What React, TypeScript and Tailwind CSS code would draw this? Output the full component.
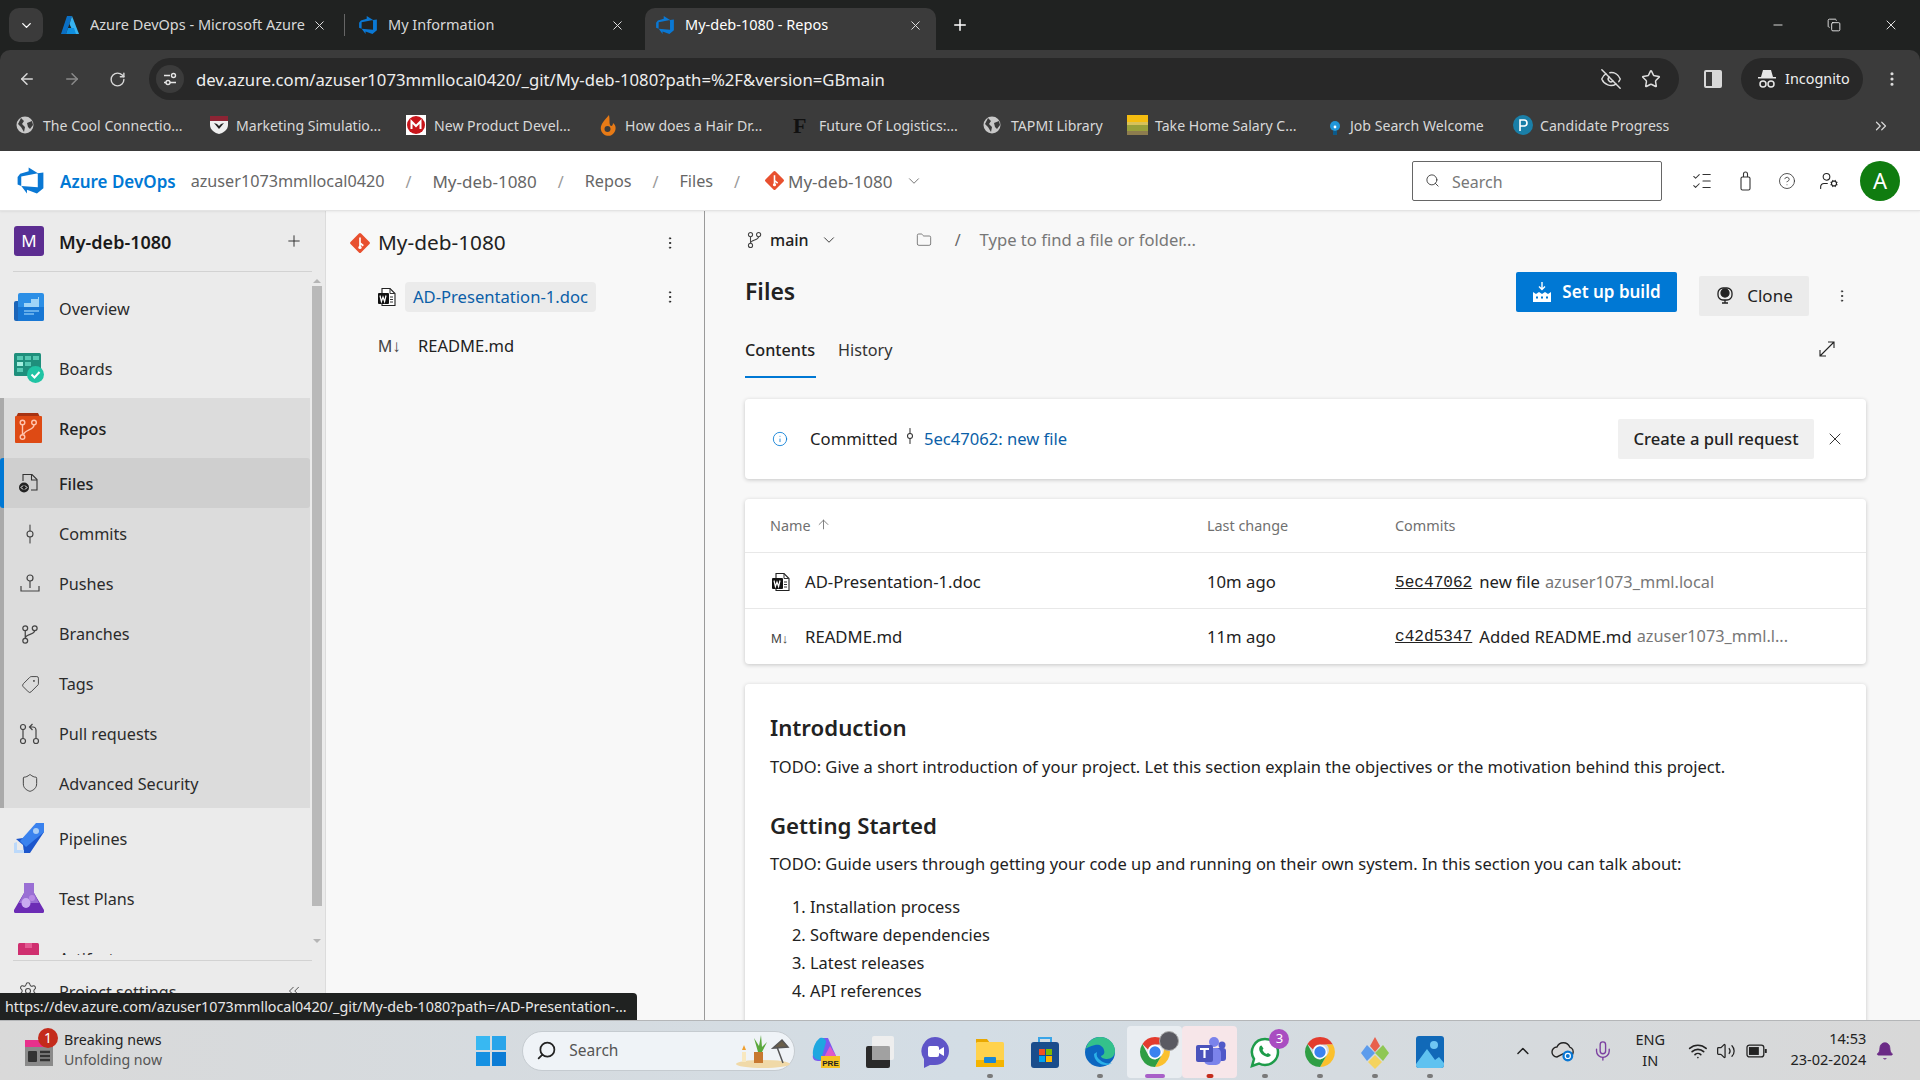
import React from "react";
import {
  X, Plus, ChevronDown, ChevronUp, ArrowLeft, ArrowRight, RotateCw, Star, EyeOff, EllipsisVertical, Search,
  ListChecks, CircleHelp, UserCog, GitCommitVertical, Tag, Shield,
  Folder, Info, ArrowUp, ChevronsLeft, Settings, Mic, Wifi, Volume2, Bell, Minus, Copy, ChevronsRight,
} from "lucide-react";

const DevOps = ({ s = 20, c = "#0a78d4" }: { s?: number; c?: string }) => (
  <svg width={s} height={s} viewBox="0 0 18 18" fill={c} className="shrink-0">
    <path d="M17 4v9.74l-4 3.28-6.2-2.26V17L3.29 12.41l10.23.8V4.44zm-3.41.49L7.85 1v2.29L2.58 4.84 1 6.87v4.61l2.26 1V6.57z" />
  </svg>
);
const AzureA = () => (
  <svg width="20" height="20" viewBox="0 0 20 20" className="shrink-0">
    <path d="M7 1h5L6 19H1z" fill="#0a6fc4" />
    <path d="M12 1l7 18h-5L9.5 9z" fill="#37b3f0" />
    <path d="M8 13h6l2 6H6z" fill="#0f8fe0" />
  </svg>
);
const GitDiamond = ({ s = 20 }: { s?: number }) => (
  <svg width={s} height={s} viewBox="0 0 20 20" className="shrink-0">
    <rect x="3.2" y="3.2" width="13.6" height="13.6" rx="1.4" transform="rotate(45 10 10)" fill="#e8502f" />
    <path d="M10 5v9M10 10l3 2.5" stroke="#fff" strokeWidth="1.5" fill="none" />
    <circle cx="10" cy="14" r="1.5" fill="#fff" />
  </svg>
);
const WordDoc = () => (
  <svg width="22" height="22" viewBox="0 0 22 22" className="shrink-0">
    <path d="M6 2.5h8l5 5v12H6z" fill="#fff" stroke="#222" strokeWidth="1.1" />
    <path d="M14 2.5v5h5M14 11h3M14 13.5h3M14 16h3" fill="none" stroke="#333" strokeWidth="1" />
    <rect x="2" y="7" width="11" height="11" fill="#111" rx="1" />
    <path d="M4 9.5l1.4 6 1.6-4.5 1.6 4.5 1.4-6" fill="none" stroke="#fff" strokeWidth="1.2" />
  </svg>
);
const MdIcon = ({ small }: { small?: boolean }) => (
  <span className={`font-['Liberation_Sans',sans-serif] leading-none text-[#444] shrink-0 ${small ? "text-[13px]" : "text-[17px]"}`}>M↓</span>
);
const BranchIcon = ({ s = 20, className = "" }: { s?: number; className?: string }) => (
  <svg width={s} height={s} viewBox="0 0 20 20" fill="none" stroke="#444" strokeWidth="1.2" className={`shrink-0 ${className}`}>
    <circle cx="5" cy="4" r="2.3" />
    <circle cx="14" cy="4" r="2.3" />
    <circle cx="5" cy="16" r="2.3" />
    <path d="M5 6.3v7.4M14 6.300c0 4.200-9 3-9 7.400" />
  </svg>
);
const PullIcon = () => (
  <svg width="22" height="22" viewBox="0 0 22 22" fill="none" stroke="#444" strokeWidth="1.2" className="shrink-0">
    <circle cx="4" cy="4" r="2.5" />
    <circle cx="4" cy="18" r="2.5" />
    <circle cx="17" cy="18" r="2.5" />
    <path d="M4 6.500v9M17 15.500V7a3 3 0 0 0-3-3h-3M13.500 1l-3 3 3 3" />
  </svg>
);

const Overview = () => (
  <svg width="30" height="30" viewBox="0 0 30 30" className="shrink-0">
    <rect x="0" y="8" width="10" height="20" rx="2" fill="#1c65b8" />
    <rect x="4" y="0" width="26" height="28" rx="2" fill="#2c8fe6" />
    <path d="M4 14h26v12a2 2 0 0 1-2 2H4z" fill="#1877d4" />
    <path d="M10 14V10h7V6h7V4h1v10z" fill="#9fd4f7" />
    <path d="M10 18h15M10 21h10" stroke="#7cc0f2" strokeWidth="1.4" />
  </svg>
);
const Boards = () => (
  <svg width="30" height="30" viewBox="0 0 30 30" className="shrink-0">
    <rect x="0" y="0" width="27" height="23" rx="1.5" fill="#1f8f7c" />
    <path d="M3 3h6v4H3zM11 3h6v4h-6zM19 3h6v4h-6zM11 9h6v4h-6zM3 15h6v4H3z" fill="#57c9b3" />
    <rect x="3" y="9" width="6" height="4" fill="#a5f0e0" />
    <circle cx="21.5" cy="21.5" r="8.5" fill="#20c4a4" />
    <path d="M17.5 21.5l3 3 5-5.5" stroke="#fff" strokeWidth="2" fill="none" />
  </svg>
);
const Repos = () => (
  <svg width="30" height="30" viewBox="0 0 30 30" className="shrink-0">
    <path d="M4 0h20l2 4H2z" fill="#a83312" />
    <rect x="1" y="3" width="27" height="27" rx="1" fill="#de4a14" />
    <g stroke="#ffc4ae" strokeWidth="1.4" fill="none">
      <circle cx="8.5" cy="9.5" r="2.3" />
      <circle cx="20" cy="9.5" r="2.3" />
      <circle cx="8.5" cy="24" r="2.3" />
      <path d="M8.5 12v9.5M20 12c0 5-9 4.5-10.5 9.5" />
    </g>
  </svg>
);
const Pipelines = () => (
  <svg width="30" height="30" viewBox="0 0 30 30" className="shrink-0">
    <path d="M30 0v9L16 30h-6l-1-8-7-6 7-1z" fill="#1c56cc" />
    <path d="M22 0h8v9L12 24l-6-6z" fill="#3a82ee" />
    <circle cx="22" cy="8" r="3" fill="#a9cdf6" />
    <path d="M0 30v-10l3-1v8h7v3z" fill="#bcd9fa" />
  </svg>
);
const TestPlans = () => (
  <svg width="30" height="30" viewBox="0 0 30 30" className="shrink-0">
    <path d="M10 0h10v10l10 17a2 2 0 0 1-2 3H2a2 2 0 0 1-2-3L10 10z" fill="#6c2cb5" />
    <path d="M10 0h10v10l5 10H5l5-10z" fill="#9a6fd4" />
    <ellipse cx="12" cy="20" rx="4.5" ry="5" fill="#c9aaf0" />
    <circle cx="18" cy="15" r="3" fill="#b88ae5" />
  </svg>
);
const Artifacts = () => (
  <svg width="22" height="30" viewBox="0 0 22 30" className="shrink-0">
    <rect x="0" y="0" width="21" height="30" rx="1.5" fill="#cf2f6f" />
    <rect x="7" y="0" width="7" height="5" fill="#e35a92" />
  </svg>
);

const FilesIcon = () => (
  <svg width="22" height="22" viewBox="0 0 22 22" className="shrink-0">
    <path d="M5 9V2.5h9l5 5V18h-6" fill="none" stroke="#333" strokeWidth="1.1" />
    <path d="M13.5 2.5V8H19" fill="none" stroke="#333" strokeWidth="1.1" />
    <circle cx="6" cy="15.5" r="5" fill="#222" />
    <path d="M5 13.5l-2 2 2 2M7 13.5l2 2-2 2" fill="none" stroke="#fff" strokeWidth="1" />
  </svg>
);
const PushIcon = () => (
  <svg width="22" height="22" viewBox="0 0 22 22" fill="none" stroke="#444" strokeWidth="1.2" className="shrink-0">
    <circle cx="11" cy="5" r="3" />
    <path d="M11 8v7M2 13v5h18v-5" />
  </svg>
);

const top = [
  { label: "Overview", icon: <Overview /> },
  { label: "Boards", icon: <Boards /> },
];
const subs = [
  { label: "Commits", icon: <GitCommitVertical size={24} strokeWidth={1.1} color="#444" /> },
  { label: "Pushes", icon: <PushIcon /> },
  { label: "Branches", icon: <BranchIcon s={21} /> },
  { label: "Tags", icon: <Tag size={19} strokeWidth={1.2} color="#444" className="-scale-x-100" /> },
  { label: "Pull requests", icon: <PullIcon /> },
  { label: "Advanced Security", icon: <Shield size={20} strokeWidth={1.2} color="#444" /> },
];

const NavText = ({ children, strong, flat }: { children: React.ReactNode; strong?: boolean; flat?: boolean }) => (
  <span className={`${flat ? "" : "mt-[2px]"} text-[16.2px] whitespace-nowrap ${strong ? "font-medium text-[#222]" : "text-[#2b2b2b]"}`}>{children}</span>
);

const Sidebar = () => (
  <aside className="w-[326px] shrink-0 bg-[#ebebeb] border-r border-[#dcdcdc] flex flex-col h-full overflow-hidden">
    <div className="h-[60px] shrink-0 flex items-center pl-[14px] pr-[22px]">
      <div className="w-[30px] h-[30px] rounded-[3px] bg-[#5c2d91] text-white flex items-center justify-center text-[17px]">M</div>
      <span className="ml-[15px] mt-[2px] text-[18px] font-semibold text-[#1a1a1a]">My-deb-1080</span>
      <Plus size={18} strokeWidth={1.2} className="ml-auto text-[#222]" />
    </div>
    <div className="h-px mx-[13px] w-[299px] bg-[#d2d2d2] shrink-0" />
    <div className="h-[683px] shrink-0 flex overflow-hidden">
      <div className="w-[310px] shrink-0 pt-[6px]">
        {top.map((t) => (
          <div key={t.label} className="h-[60px] flex items-center pl-[14px] gap-[15px]">
            <span className="w-[30px] flex justify-center">{t.icon}</span>
            <NavText>{t.label}</NavText>
          </div>
        ))}
        <div className="bg-[#dcdcdc] border-l-4 border-[#aaaaaa]">
          <div className="h-[60px] flex items-center pl-[10px] gap-[15px]">
            <Repos />
            <NavText strong>Repos</NavText>
          </div>
          <div className="h-[50px] flex items-center pl-[11px] -ml-1 bg-[#cfcfcf] border-l-4 border-[#0078d4] rounded-[3px] mb-px gap-[18px]">
            <span className="w-[25px] flex justify-center ml-[1px]"><FilesIcon /></span>
            <NavText strong>Files</NavText>
          </div>
          {subs.map((t, i) => (
            <div key={t.label} className={`flex items-center pl-[14px] gap-[17px] ${i === 5 ? "h-[49px] pb-px" : "h-[50px]"}`}>
              <span className="w-[24px] flex justify-center">{t.icon}</span>
              <NavText flat={i < 5}>{t.label}</NavText>
            </div>
          ))}
        </div>
        <div className="h-[60px] flex items-center pl-[14px] gap-[15px]">
          <Pipelines />
          <NavText>Pipelines</NavText>
        </div>
        <div className="h-[60px] flex items-center pl-[14px] gap-[15px]">
          <TestPlans />
          <NavText>Test Plans</NavText>
        </div>
        <div className="h-[60px] flex items-center pl-[18px] gap-[19px]">
          <Artifacts />
          <NavText>Artifacts</NavText>
        </div>
      </div>
      <div className="w-[10px] ml-[2px] shrink-0 flex flex-col items-center pt-[7px]">
        <div className="w-0 h-0 border-l-[4px] border-r-[4px] border-b-[4px] border-transparent border-b-[#b5b5b5]" />
        <div className="w-[10px] h-[620px] mt-[3px] bg-[#b9b9b9]" />
        <div className="mt-[33px] w-0 h-0 border-l-[4px] border-r-[4px] border-t-[4px] border-transparent border-t-[#b5b5b5]" />
      </div>
    </div>
    <div className="h-[5px] shrink-0" />
    <div className="h-px mx-[13px] w-[299px] bg-[#d2d2d2] shrink-0" />
    <div className="h-[60px] shrink-0 flex items-center pl-[18px] pr-[22px] gap-[21px]">
      <Settings size={20} strokeWidth={1.25} color="#444" />
      <NavText>Project settings</NavText>
      <ChevronsLeft size={18} strokeWidth={1.1} className="ml-auto text-[#333]" />
    </div>
  </aside>
);

const TreePanel = () => (
  <section className="w-[379px] shrink-0 bg-[#f8f8f8] border-r border-[#9a9a9a] h-full pt-[16px]">
    <div className="h-[32px] flex items-center pl-[23px] pr-[26px]">
      <GitDiamond s={22} />
      <span className="ml-[7px] text-[20.8px] text-[#222]">My-deb-1080</span>
      <EllipsisVertical size={16} strokeWidth={1.5} className="ml-auto text-[#222]" />
    </div>
    <div className="mt-[23px] h-[30px] flex items-center pl-[50px] pr-[26px]">
      <WordDoc />
      <span className="ml-[7px] h-[30px] w-[191px] rounded-[4px] bg-[#ebebeb] flex items-center pl-[8px] pt-[1px] text-[16.6px] text-[#0b5fa8] whitespace-nowrap">AD-Presentation-1.doc</span>
      <EllipsisVertical size={16} strokeWidth={1.5} className="ml-auto text-[#222]" />
    </div>
    <div className="mt-[19px] h-[30px] flex items-center pl-[52px]">
      <span className="w-[40px]"><MdIcon /></span>
      <span className="text-[16.5px] text-[#222]">README.md</span>
    </div>
  </section>
);

const Card = ({ className = "", children }: { className?: string; children: React.ReactNode }) => (
  <div className={`bg-white rounded-[4px] shadow-[0_1px_4px_rgba(0,0,0,0.2)] ${className}`}>{children}</div>
);

const rowCols = "grid grid-cols-[437px_188px_1fr] items-center pl-[25px]";

const Main = () => (
  <main className="flex-1 min-w-0 h-full bg-[#f8f8f8] overflow-hidden pl-[40px] pr-[54px] pt-[12px]">
    <div className="h-[34px] flex items-center">
      <BranchIcon s={18} className="ml-[1px]" />
      <span className="ml-[6px] text-[16px] font-medium text-[#222]">main</span>
      <ChevronDown size={18} strokeWidth={1.25} className="ml-[11px] text-[#333]" />
      <Folder size={16} strokeWidth={1.1} className="ml-[78px] text-[#555]" />
      <span className="ml-[23px] text-[16px] text-[#666]">/</span>
      <span className="ml-[19px] text-[16.6px] text-[#777]">Type to find a file or folder...</span>
    </div>
    <div className="h-[56px] mt-[11px] flex items-center">
      <h1 className="text-[23px] font-semibold text-[#222] mt-[-9px]">Files</h1>
      <button className="ml-auto h-[40px] w-[161px] mt-[-8px] rounded-[2px] bg-[#0078d4] text-white text-[17px] font-semibold flex items-center justify-center gap-[10px]">
        <svg width="20" height="22" viewBox="0 0 20 22" fill="#fff" className="shrink-0">
          <path d="M10 1v7M7 5.500l3 3 3-3" fill="none" stroke="#fff" strokeWidth="1.4" />
          <path d="M1 11l3 2 3-2 3 2 3-2 3 2 3-2v10H1z" />
          <path d="M4 15.500h2v2H4zM9 15.500h2v2H9zM14 15.500h2v2h-2z" fill="#0078d4" />
        </svg>
        Set up build
      </button>
      <button className="ml-[22px] h-[40px] w-[110px] rounded-[2px] bg-[#ebebeb] text-[#222] text-[17px] flex items-center justify-center gap-[12px]">
        <svg width="20" height="20" viewBox="0 0 20 20" fill="none" stroke="#222" strokeWidth="1.3">
          <rect x="3" y="2" width="14" height="12" rx="5" />
          <circle cx="10" cy="7" r="4" fill="#222" />
          <path d="M7 17h6M10 14v3" />
        </svg>
        Clone
      </button>
      <EllipsisVertical size={16} strokeWidth={1.5} className="ml-[25px] mr-[16px] text-[#333]" />
    </div>
    <div className="h-[46px] mt-[8px] flex">
      <div className="w-[71px] border-b-2 border-[#0078d4] text-[16.2px] font-medium text-[#222] pt-[6px] whitespace-nowrap">Contents</div>
      <div className="ml-[22px] text-[16.2px] text-[#333] pt-[6px]">History</div>
      <svg width="20" height="20" viewBox="0 0 20 20" fill="none" stroke="#222" strokeWidth="1.1" className="ml-[auto] mr-[29px] mt-[7px]">
        <path d="M3 17L17 3M11 3h6v6M3 11v6h6" />
      </svg>
    </div>
    <Card className="mt-[21px] h-[80px] flex items-center pl-[27px] pr-[21px]">
      <Info size={16} strokeWidth={1.25} className="text-[#0078d4]" />
      <span className="ml-[22px] text-[16.7px] text-[#222]">Committed</span>
      <GitCommitVertical size={20} strokeWidth={1.25} className="ml-[2px] mt-[-6px] text-[#333]" />
      <span className="ml-[4px] text-[16.6px] text-[#0b5fa8]">5ec47062: new file</span>
      <button className="ml-auto h-[40px] w-[196px] rounded-[2px] bg-[#f0f0f0] text-[16.6px] text-[#222] font-medium">Create a pull request</button>
      <X size={20} strokeWidth={1.1} className="ml-[11px] text-[#222]" />
    </Card>
    <Card className="mt-[20px]">
      <div className={`h-[54px] ${rowCols} text-[14.4px] text-[#707070] border-b border-[#e8e8e8]`}>
        <span className="flex items-center gap-[5px]">Name <ArrowUp size={15} strokeWidth={1.4} className="mt-[-2px]" /></span>
        <span>Last change</span>
        <span>Commits</span>
      </div>
      <div className={`h-[56px] ${rowCols} pt-[3px] text-[16.7px] text-[#222] border-b border-[#e8e8e8]`}>
        <span className="flex items-center gap-[13px]"><WordDoc />AD-Presentation-1.doc</span>
        <span>10m ago</span>
        <span className="flex items-center whitespace-nowrap">
          <span className="underline mt-[2px] font-['Liberation_Mono',monospace] text-[16.1px]">5ec47062</span>
          <span className="ml-[7px]">new file</span>
          <span className="ml-[5px] text-[16.3px] text-[#777]">azuser1073_mml.local</span>
        </span>
      </div>
      <div className={`h-[55px] ${rowCols} text-[16.7px] text-[#222]`}>
        <span className="flex items-center"><span className="w-[35px] pl-[1px]"><MdIcon small /></span>README.md</span>
        <span>11m ago</span>
        <span className="flex items-center whitespace-nowrap">
          <span className="underline mt-[2px] font-['Liberation_Mono',monospace] text-[16.1px]">c42d5347</span>
          <span className="ml-[7px]">Added README.md</span>
          <span className="ml-[5px] text-[16.3px] text-[#777]">azuser1073_mml.l...</span>
        </span>
      </div>
    </Card>
    <Card className="mt-[20px] h-[500px] pl-[25px] pr-[25px] pt-[26px] text-[#222]">
      <h2 className="text-[22.2px] font-semibold leading-[34px] mt-px">Introduction</h2>
      <p className="mt-[9px] text-[16.5px] leading-[26px]">TODO: Give a short introduction of your project. Let this section explain the objectives or the motivation behind this project.</p>
      <h2 className="mt-[29px] text-[22.2px] font-semibold leading-[34px]">Getting Started</h2>
      <p className="mt-[8px] text-[16.5px] leading-[26px]">TODO: Guide users through getting your code up and running on their own system. In this section you can talk about:</p>
      <ol className="mt-[16px] list-decimal pl-[40px] text-[16.4px] leading-[28px]">
        <li>Installation process</li>
        <li>Software dependencies</li>
        <li>Latest releases</li>
        <li>API references</li>
      </ol>
    </Card>
  </main>
);

const Tab = ({ icon, text, active, cls }: { icon: React.ReactNode; text: string; active?: boolean; cls: string }) => (
  <div className={`flex items-center h-[42px] pl-[10px] pb-[8px] ${cls} ${active ? "bg-[#3b3b3b] rounded-t-[10px]" : ""}`}>
    {icon}
    <span className={`ml-[10px] flex-1 min-w-0 overflow-hidden whitespace-nowrap text-[14.5px] ${active ? "text-white" : "text-[#d8d8d8]"}`}>{text}</span>
    <X size={15} strokeWidth={1.6} className="ml-[6px] text-[#ddd] shrink-0" />
  </div>
);

const Globe = () => (
  <svg width="18" height="18" viewBox="0 0 18 18" className="shrink-0">
    <circle cx="9" cy="9" r="8.5" fill="#c8c8c8" />
    <path d="M5 2l3 3-2 3 3 3-1 5-3-5-3-3zM11 7l5-2 1 4-3 4-2-2z" fill="#3b3b3b" />
  </svg>
);
const marks = [
  { t: "The Cool Connectio...", i: <Globe />, w: "w-[193px]", g: "gap-[9px]" },
  { t: "Marketing Simulatio...", i: <svg width="20" height="20" viewBox="0 0 20 20" className="shrink-0"><path d="M1 1h18v9c0 5-5 8-9 9-4-1-9-4-9-9z" fill="#eee" /><path d="M1 1h18v5H1z" fill="#8c2434" /><path d="M5 8l5 6 5-6-3 1-2 2-2-2z" fill="#222" /></svg>, w: "w-[197px]", g: "gap-[7px]" },
  { t: "New Product Devel...", i: <svg width="20" height="20" viewBox="0 0 20 20" className="shrink-0"><rect width="20" height="20" fill="#fff" /><circle cx="10" cy="10" r="9" fill="#c8151b" /><path d="M5.5 14V6.5L10 11l4.5-4.5V14" fill="none" stroke="#fff" strokeWidth="2" /></svg>, w: "w-[192px]", g: "gap-[8px]" },
  { t: "How does a Hair Dr...", i: <svg width="20" height="24" viewBox="0 0 20 24" className="shrink-0"><path d="M11 1C5 8 2 11 3 16c1 5 8 8 12 4s3-9 0-11c0 3-2 4-3 2s0-6-1-10z" fill="#e77a16" /><circle cx="9.5" cy="15" r="3" fill="#3b3b3b" /></svg>, w: "w-[195px]", g: "gap-[7px]" },
  { t: "Future Of Logistics:...", i: <span className="w-[20px] text-[22px] leading-none font-['Liberation_Serif',serif] font-bold text-[#111] shrink-0">F</span>, w: "w-[190px]", g: "gap-[6px]" },
  { t: "TAPMI Library", i: <Globe />, w: "w-[144px]", g: "gap-[10px]" },
  { t: "Take Home Salary C...", i: <svg width="21" height="20" viewBox="0 0 21 20" className="shrink-0"><rect width="21" height="7" fill="#f5bd10" /><rect y="7" width="21" height="3" fill="#d8c25a" /><rect y="10" width="21" height="6" fill="#99a03b" /><rect y="16" width="21" height="4" fill="#8d7c4e" /></svg>, w: "w-[198px]", g: "gap-[7px]" },
  { t: "Job Search Welcome", i: <svg width="20" height="22" viewBox="0 0 20 22" className="shrink-0"><circle cx="10" cy="11" r="5" fill="#2196d8" /><rect x="8" y="16" width="4" height="4" fill="#0b5a8a" /><circle cx="10" cy="12" r="1.4" fill="#fff" /></svg>, w: "w-[188px]", g: "gap-[5px]" },
  { t: "Candidate Progress", i: <svg width="20" height="20" viewBox="0 0 20 20" className="shrink-0"><circle cx="10" cy="10" r="10" fill="#1a7fa8" /><path d="M7 16V5h4a3 3 0 0 1 0 6H7" fill="none" stroke="#fff" strokeWidth="1.6" /></svg>, w: "", g: "gap-[7px]" },
];

const BrowserChrome = () => (
  <header className="shrink-0 bg-[#202221]">
    <div className="h-[50px] flex items-end pl-[9px]">
      <div className="mb-[8px] w-[34px] h-[34px] rounded-[10px] bg-[#3b3b3b] flex items-center justify-center shrink-0">
        <ChevronDown size={15} strokeWidth={2.2} className="text-white" />
      </div>
      <div className="ml-[7px] flex items-end">
        <Tab icon={<AzureA />} text="Azure DevOps - Microsoft Azure" cls="w-[294px] pr-[17px]" />
        <div className="w-px h-[22px] bg-[#666] mb-[14px]" />
        <Tab icon={<DevOps />} text="My Information" cls="w-[284px] ml-[3px] pr-[7px]" />
        <div className="w-[13px]" />
        <Tab icon={<DevOps />} text="My-deb-1080 - Repos" active cls="w-[291px] pr-[13px]" />
      </div>
      <Plus size={18} strokeWidth={2} className="ml-[15px] mb-[16px] text-white" />
      <div className="ml-auto flex items-center mb-[17px] pr-[21px] gap-[42px] text-white">
        <Minus size={14} strokeWidth={1.4} />
        <Copy size={14} strokeWidth={1.4} />
        <X size={16} strokeWidth={1.3} />
      </div>
    </div>
    <div className="h-[101px] bg-[#3b3b3b] rounded-tl-[10px] rounded-tr-[10px]">
      <div className="h-[50px] pt-[8px] flex items-center pl-[18px]">
        <ArrowLeft size={18} strokeWidth={2} className="text-[#d8d8d8]" />
        <ArrowRight size={18} strokeWidth={2} className="ml-[27px] text-[#8a8a8a]" />
        <RotateCw size={17} strokeWidth={2} className="ml-[28px] text-[#d8d8d8]" />
        <div className="ml-[23px] w-[1530px] h-[42px] rounded-full bg-[#282828] flex items-center pl-[7px] pr-[18px]">
          <span className="w-[28px] h-[28px] rounded-full bg-[#3b3b3b] flex items-center justify-center">
            <svg width="16" height="16" viewBox="0 0 16 16" fill="none" stroke="#e6e6e6" strokeWidth="1.4">
              <path d="M2 4.5h6M2 11.5h2M8 11.5h6" />
              <circle cx="11.5" cy="4.5" r="2" />
              <circle cx="6" cy="11.5" r="2" />
            </svg>
          </span>
          <span className="ml-[12px] mt-[1px] text-[16.7px] text-[#eee] whitespace-nowrap">dev.azure.com/azuser1073mmllocal0420/_git/My-deb-1080?path=%2F&amp;version=GBmain</span>
          <EyeOff size={22} strokeWidth={1.6} className="ml-auto text-[#ddd]" />
          <Star size={20} strokeWidth={1.8} className="ml-[19px] text-[#ddd]" />
        </div>
        <div className="ml-[25px] w-[18px] h-[18px] rounded-[2px] border-2 border-[#d8d8d8] flex justify-end">
          <div className="w-[8px] bg-[#d8d8d8]" />
        </div>
        <div className="ml-[19px] h-[42px] w-[122px] rounded-full bg-[#282828] flex items-center pl-[17px] gap-[9px]">
          <svg width="18" height="20" viewBox="0 0 18 20" fill="#e6e6e6" className="shrink-0">
            <path d="M5 1h8l2 7h3v1.5H0V8h3z" />
            <circle cx="5" cy="15" r="3" fill="none" stroke="#e6e6e6" strokeWidth="1.5" />
            <circle cx="13" cy="15" r="3" fill="none" stroke="#e6e6e6" strokeWidth="1.5" />
          </svg>
          <span className="text-[14.4px] text-[#eee]">Incognito</span>
        </div>
        <EllipsisVertical size={18} strokeWidth={2.2} className="ml-[20px] text-[#ddd]" />
      </div>
      <div className="h-[51px] flex items-center pl-[16px] text-[14.1px] text-[#d8d8d8] whitespace-nowrap">
        {marks.map((m) => (
          <div key={m.t} className={`flex items-center ${m.w} ${m.g}`}>{m.i}<span>{m.t}</span></div>
        ))}
        <ChevronsRight size={18} strokeWidth={1.6} className="ml-auto mr-[30px] text-[#d8d8d8]" />
      </div>
    </div>
  </header>
);

const Crumb = ({ children, big }: { children: React.ReactNode; big?: boolean }) => (
  <>
    <span className={`text-[#666] whitespace-nowrap ${big ? "text-[17px]" : "text-[16.2px]"}`}>{children}</span>
    <span className="text-[16px] text-[#999]">/</span>
  </>
);

const AppHeader = () => (
  <div className="h-[60px] shrink-0 bg-white border-b border-[#e4e4e4] flex items-center pl-[16px] pr-[20px] shadow-[0_1px_2px_rgba(0,0,0,0.06)] relative">
    <DevOps s={29} c="#0a78d4" />
    <span className="ml-[15px] mt-[2px] text-[17px] font-semibold text-[#0078d4] whitespace-nowrap">Azure DevOps</span>
    <span className="ml-[15px] mt-[2px] flex items-center gap-[21px]">
      <Crumb>azuser1073mmllocal0420</Crumb>
      <Crumb big>My-deb-1080</Crumb>
      <Crumb>Repos</Crumb>
      <Crumb>Files</Crumb>
    </span>
    <span className="ml-[24px]"><GitDiamond s={21} /></span>
    <span className="ml-[3px] mt-[2px] text-[17px] text-[#666]">My-deb-1080</span>
    <ChevronDown size={18} strokeWidth={1.2} className="ml-[13px] text-[#666]" />
    <div className="ml-auto w-[250px] h-[40px] border border-[#666] rounded-[2px] flex items-center pl-[12px] gap-[12px]">
      <Search size={15} strokeWidth={1.4} className="text-[#333]" />
      <span className="mt-[2px] text-[16px] text-[#777]">Search</span>
    </div>
    <ListChecks size={22} strokeWidth={1.1} className="ml-[29px] text-[#333]" />
    <svg width="19" height="20" viewBox="0 0 19 20" fill="none" stroke="#333" strokeWidth="1.1" className="ml-[23px]">
      <rect x="5" y="6" width="9" height="13" rx="1.500" />
      <path d="M7.500 6V3a2 2 0 0 1 4 0v3" />
    </svg>
    <CircleHelp size={18} strokeWidth={1.1} className="ml-[23px] text-[#333]" />
    <UserCog size={20} strokeWidth={1.3} className="ml-[23px] text-[#222]" />
    <div className="ml-[21px] w-[40px] h-[40px] rounded-full bg-[#107c10] text-white flex items-center justify-center text-[22px]">A</div>
  </div>
);

const Dot = ({ c = "#7a7a7a", w = "w-[6px]" }: { c?: string; w?: string }) => <span className={`absolute bottom-[0px] left-1/2 -translate-x-1/2 h-[4px] rounded-full ${w}`} style={{ background: c }} />;

const ChromeIcon = ({ s = 30 }: { s?: number }) => (
  <svg width={s} height={s} viewBox="0 0 30 30">
    <path d="M15 1a14 14 0 0 1 12.1 7H15a7 7 0 0 0-6.6 4.7L3.2 7.6A14 14 0 0 1 15 1z" fill="#e33b2e" />
    <path d="M27.1 8A14 14 0 0 1 15 29l6-10.5A7 7 0 0 0 21 8z" fill="#fbc02d" />
    <path d="M15 29A14 14 0 0 1 3.2 7.6L9 18.5a7 7 0 0 0 6.5 3.5l5.5-3.5z" fill="#2f9e44" />
    <circle cx="15" cy="15" r="6" fill="#3b82f0" stroke="#fff" strokeWidth="1.4" />
  </svg>
);
const tb: { k: string; el: React.ReactNode; dot?: React.ReactNode; cls?: string }[] = [
  { k: "copilot", el: <svg width="30" height="32" viewBox="0 0 30 32"><path d="M10 2h8l8 18c1 3-2 5-5 5H8c-4 0-6-3-5-6z" fill="#7a5af0" /><path d="M10 2c-5 3-8 12-7 17 1 4 4 5 8 5l5-18c0-3-3-5-6-4z" fill="#1fa7e0" /><path d="M20 10l6 10c1 3-2 5-5 5h-9z" fill="#e05ac8" /><rect x="11" y="20" width="19" height="12" fill="#f6c323" /><text x="20.5" y="29.5" fontSize="8" fontWeight="700" textAnchor="middle" fill="#222" fontFamily="Liberation Sans">PRE</text></svg> },
  { k: "task", el: <svg width="32" height="32" viewBox="0 0 32 32"><rect x="8" y="0" width="22" height="24" rx="2" fill="#eee" /><rect x="2" y="10" width="24" height="22" rx="2" fill="#2a2a2a" /><path d="M8 10h18v14H8z" fill="#c9c9c9" opacity="0.75" /></svg> },
  { k: "meet", el: <svg width="30" height="32" viewBox="0 0 30 32"><path d="M15 1a14 14 0 0 1 0 28h-5l-6 3V23A14 14 0 0 1 15 1z" fill="#5f55c8" /><rect x="8" y="10" width="11" height="11" rx="2" fill="#fff" /><path d="M19 14l5-3v9l-5-3z" fill="#fff" /></svg> },
  { k: "files", el: <svg width="32" height="32" viewBox="0 0 32 32"><path d="M2 3h11l3 4H2z" fill="#e9a800" /><rect x="2" y="6" width="28" height="25" rx="1.5" fill="#ffd24d" /><rect x="2" y="24" width="28" height="7" fill="#f4b400" /><rect x="10" y="21" width="12" height="6" rx="1" fill="#1a86d4" /></svg>, dot: <Dot /> },
  { k: "store", el: <svg width="30" height="32" viewBox="0 0 30 32"><path d="M9 6V2h12v4" fill="none" stroke="#39a5e8" strokeWidth="2" /><rect x="1" y="6" width="28" height="26" rx="3" fill="#1a4d8c" /><rect x="9" y="13" width="6" height="6" fill="#f25022" /><rect x="16" y="13" width="6" height="6" fill="#7fba00" /><rect x="9" y="20" width="6" height="6" fill="#00a4ef" /><rect x="16" y="20" width="6" height="6" fill="#ffb900" /></svg> },
  { k: "edge", el: <svg width="32" height="32" viewBox="0 0 32 32"><circle cx="16" cy="16" r="15" fill="#0c66c0" /><path d="M1.5 14C3 6 9 1 16 1c8 0 15 6 15 14 0 5-4 8-8 8-3 0-6-1-6-3 3-1 4-3 3-6-1-4-5-6-9-5-5 1-9 3-10.500 5z" fill="#34c18b" /><path d="M10 18c0 6 5 11 12 11 2 0 4-1 6-2-4 1-9 0-12-3-3-2-4-5-3-8z" fill="#2bb1e8" /></svg>, dot: <Dot /> },
  { k: "chrome", el: <ChromeIcon s={32} />, cls: "bg-[#e9edf1] rounded-[4px]", dot: <><Dot c="#a860c8" w="w-[20px]" /><span className="absolute top-[5px] right-[3px] w-[20px] h-[20px] rounded-full bg-[#5a5a62] border border-[#aaa]" /></> },
  { k: "teams", el: <svg width="32" height="32" viewBox="0 0 32 32"><circle cx="20" cy="6" r="5" fill="#7b83eb" /><circle cx="28" cy="9" r="3.5" fill="#5059c9" /><rect x="17" y="12" width="15" height="13" rx="3" fill="#5059c9" /><rect x="10" y="12" width="17" height="17" rx="5" fill="#7b83eb" /><rect x="2" y="9" width="17" height="17" rx="2" fill="#4b53bc" /><path d="M6 13h9M10.500 13v9" stroke="#fff" strokeWidth="2.2" /></svg>, cls: "bg-[#f7e6e9] rounded-[4px]", dot: <Dot c="#c42b1c" w="w-[7px]" /> },
  { k: "wa", el: <svg width="32" height="32" viewBox="0 0 32 32"><path d="M16 3a13 13 0 0 1 0 26c-2 0-4-.4-6-1.500L3 30l2-7A13 13 0 0 1 16 3z" fill="#fff" stroke="#1e9c4a" strokeWidth="2.5" /><path d="M11 10c-2 3 0 7 3 9s6 3 8 0l-3-2-1.500 1c-2-1-3-2-4-4l1-1.500-2-3z" fill="#1e9c4a" /></svg>, dot: <><Dot /><span className="absolute top-[3px] right-[3px] w-[20px] h-[20px] rounded-full bg-[#a94dc1] text-white text-[13px] flex items-center justify-center leading-none">3</span></> },
  { k: "chrome2", el: <ChromeIcon s={32} />, dot: <Dot /> },
  { k: "kite", el: <svg width="32" height="34" viewBox="0 0 32 34"><path d="M16 2l5 9-5 6-5-6z" fill="#e8604c" /><path d="M8 10l8 8-8 8-6-8z" fill="#5d9cec" /><path d="M24 10l6 8-6 8-8-8z" fill="#8fc754" /><path d="M16 20l7 7-7 7-7-7z" fill="#f4d35e" /></svg>, dot: <Dot /> },
  { k: "photos", el: <svg width="28" height="32" viewBox="0 0 28 32"><rect width="28" height="32" rx="3" fill="#1169b8" /><circle cx="18" cy="9" r="4" fill="#6fc6f2" /><path d="M0 28l11-15 8 11 4-3 5 6v2a3 3 0 0 1-3 3H3a3 3 0 0 1-3-2z" fill="#5fc2f0" /></svg>, dot: <Dot /> },
];

const Taskbar = () => (
  <footer className="h-[60px] shrink-0 border-t border-[#b4b6b8] bg-gradient-to-r from-[#d9d9d9] via-[#d3dde5] to-[#d8d8d8] flex items-center">
    <div className="ml-[25px] relative w-[30px] h-[30px] shrink-0">
      <svg width="30" height="30" viewBox="0 0 30 30" className="mt-[4px]">
        <rect x="0" y="0" width="28" height="7" fill="#e8308c" />
        <rect x="0" y="7" width="28" height="19" fill="#8a8a8a" />
        <rect x="3" y="11" width="9" height="11" rx="1" fill="#333" />
        <path d="M15 12h10M15 16h10M15 20h10" stroke="#333" strokeWidth="2.500" />
      </svg>
      <span className="absolute -top-[8px] left-[13px] w-[20px] h-[20px] rounded-full bg-[#c42b1c] text-white text-[14px] flex items-center justify-center leading-none">1</span>
    </div>
    <div className="ml-[9px] text-[14.2px] leading-[20px] whitespace-nowrap w-[150px] pb-[2px]">
      <div className="text-[#222]">Breaking news</div>
      <div className="text-[#555]">Unfolding now</div>
    </div>
    <div className="ml-[264px] w-[30px] h-[30px] grid grid-cols-2 grid-rows-2 gap-[2px] shrink-0">
      <span className="bg-[#38b8f2]" /><span className="bg-[#2aa5ea]" /><span className="bg-[#1591e2]" /><span className="bg-[#0b7cd5]" />
    </div>
    <div className="ml-[16px] w-[273px] h-[40px] rounded-full bg-[#eff3f7] border border-[#c5cbd0] flex items-center pl-[13px] shrink-0">
      <Search size={21} strokeWidth={2} className="text-[#222] -scale-x-100" />
      <span className="ml-[12px] text-[15.5px] text-[#555]">Search</span>
      <svg width="58" height="36" viewBox="0 0 58 36" className="ml-auto mr-[1px]">
        <ellipse cx="28" cy="31" rx="27" ry="4" fill="#f0d9a8" />
        <rect x="7" y="19" width="4" height="10" fill="#f8e8c0" />
        <path d="M9 12l2 5H7z" fill="#f0a030" />
        <rect x="19" y="19" width="9" height="11" fill="#c87830" />
        <path d="M23 19L19 5l5 8 2-11 1 12 5-5-5 10z" fill="#5aa83c" />
        <path d="M48 30L42 14M38 15l9-8 6 7z" stroke="#555" strokeWidth="1.500" fill="#6a5f4a" />
      </svg>
    </div>
    <div className="ml-[2px] flex h-[58px] items-center">
      {tb.map((t) => (
        <div key={t.k} className={`relative w-[55px] h-[52px] mt-[2px] flex items-center justify-center ${t.cls ?? ""}`}>
          {t.el}
          {t.dot}
        </div>
      ))}
    </div>
    <ChevronUp size={20} strokeWidth={1.8} className="ml-[56px] text-[#222]" />
    <svg width="24" height="22" viewBox="0 0 24 22" className="ml-[18px]">
      <path d="M6 17a5 5 0 0 1 0-10 7 7 0 0 1 13 0c3 1 4 4 3 7H12z" fill="#d8d8d8" stroke="#222" strokeWidth="1.400" />
      <circle cx="17" cy="16" r="5.500" fill="#0a78d4" />
      <circle cx="17" cy="16" r="2.600" fill="none" stroke="#fff" strokeWidth="1.200" />
    </svg>
    <Mic size={22} strokeWidth={1.5} className="ml-[17px] text-[#7b3fa0]" />
    <div className="ml-[9px] w-[56px] text-center text-[14.5px] leading-[21px] text-[#222] pb-[2px]">ENG<br />IN</div>
    <Wifi size={20} strokeWidth={2} className="ml-[10px] text-[#222]" />
    <Volume2 size={20} strokeWidth={1.5} className="ml-[8px] text-[#222]" />
    <svg width="22" height="14" viewBox="0 0 22 14" className="ml-[10px]">
      <rect x="1" y="1" width="17" height="12" rx="2.500" fill="none" stroke="#222" strokeWidth="1.300" />
      <rect x="3" y="3" width="10" height="8" fill="#222" />
      <rect x="19" y="5" width="2" height="4" fill="#222" />
    </svg>
    <div className="ml-auto w-[100px] text-right text-[14.5px] leading-[21px] text-[#222] pb-[3px]">14:53<br />23-02-2024</div>
    <Bell size={20} fill="#6b2a86" strokeWidth={1} className="ml-[9px] mr-[25px] text-[#6b2a86]" />
  </footer>
);

export default function App() {
  return (
    <div className="relative w-[1920px] h-[1080px] flex flex-col overflow-hidden bg-white font-['Noto_Sans',sans-serif]">
      <BrowserChrome />
      <AppHeader />
      <div className="flex-1 min-h-0 flex overflow-hidden">
        <Sidebar />
        <TreePanel />
        <Main />
      </div>
      <Taskbar />
      <div className="absolute left-0 top-[993px] w-[637px] h-[27px] bg-[#202221] text-[#e8e8e8] text-[14.3px] leading-[27px] pl-[5px] rounded-tr-[4px] whitespace-nowrap overflow-hidden">
        https://dev.azure.com/azuser1073mmllocal0420/_git/My-deb-1080?path=/AD-Presentation-...
      </div>
    </div>
  );
}
